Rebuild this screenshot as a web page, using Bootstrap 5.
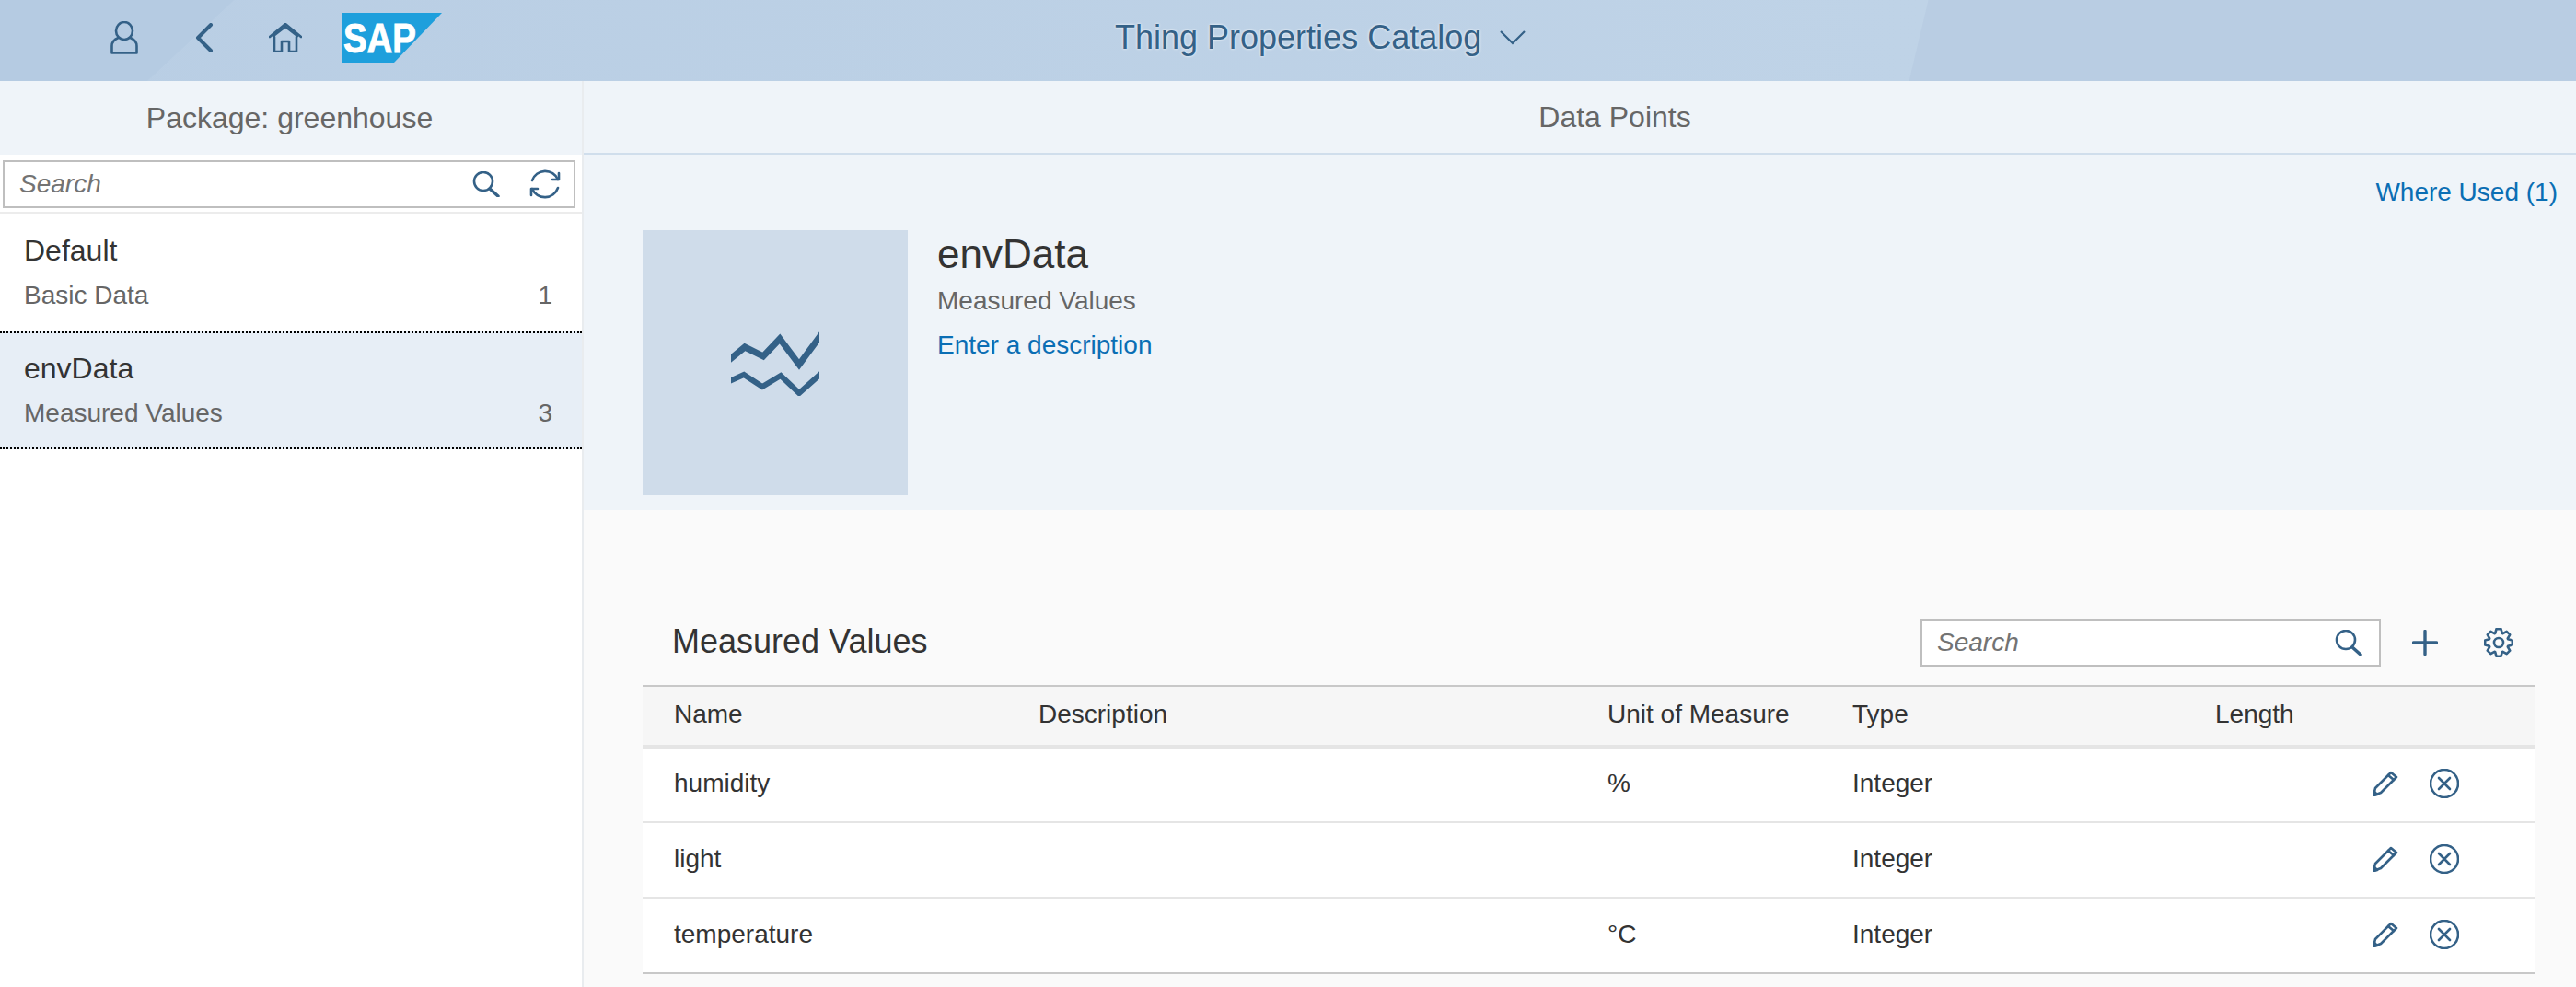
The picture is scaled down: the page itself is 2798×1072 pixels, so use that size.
<!DOCTYPE html>
<html lang="en">
<head>
  <meta charset="UTF-8">
  <title>Thing Properties Catalog</title>
  <link href="https://cdn.jsdelivr.net/npm/bootstrap@5.3.3/dist/css/bootstrap.min.css" rel="stylesheet">
  <style>
    html, body { height: 100%; }
    body { font-family: "Liberation Sans", Arial, sans-serif; font-size: 28px; color: #333; background: #fafafa; overflow: hidden; }
    svg { display: block; flex: none; }
    .ico { fill: none; stroke: #346187; stroke-width: 2.6; stroke-linecap: round; stroke-linejoin: round; }

    .shell-bar { height: 88px; padding-bottom: 6px; background:
      linear-gradient(137deg, #b5cbe2 0, #b5cbe2 173px, transparent 174px),
      linear-gradient(103.4deg, transparent 0, transparent 2037px, #b9cde3 2038px),
      linear-gradient(90deg, #b9cee4 0, #bfd3e7 2090px); }
    .shell-ico { margin-left: 120px; }
    .shell-title { margin-left: 731px; color: #346187; font-size: 36px; text-shadow: 0 0 3px #fff; }

    .side-pane { width: 634px; background: #fff; border-right: 2px solid #e9ecef; }
    .pane-title { height: 80px; background: #eff4f9; color: #666; font-size: 32px; padding-right: 3px; }
    .data-title { padding-left: 76px; height: 80px; border-bottom: 2px solid #d0deec; background: #eff4f9; color: #666; font-size: 32px; }

    .search-row { height: 64px; padding: 6px 7px 4px 3px; border-bottom: 2px solid #ececec; }
    .search-box { height: 52px; border: 2px solid #bfbfbf; background: #fff; }
    .search-box input { border: 0; outline: 0; flex: 1; min-width: 0; padding: 0 0 0 16px; font-size: 28px; font-style: italic; color: #666; background: transparent; }
    .search-box input::placeholder { color: #737373; opacity: 1; }

    .pkg-list .list-group-item { height: 128px; padding: 0 32px 3px 26px; border: 0; border-radius: 0; background: #fff; color: #333; }
    .pkg-list .pkg-on { height: 128px; background: #e7eef6; border-top: 2px dotted #000; border-bottom: 2px dotted #000; }
    .pkg-name { font-size: 32px; line-height: 40px; }
    .pkg-sub { font-size: 28px; line-height: 34px; color: #666; margin-top: 12px; }

    .obj-head { height: 386px; background: #eff4f9; }
    .where-row { height: 82px; padding-right: 20px; padding-top: 25px; line-height: 32px; }
    .link-sap { color: #0a6eb4; text-decoration: none; }
    .obj-tile { width: 288px; height: 288px; background: #cfdcea; margin-left: 64px; margin-right: 32px; }
    .obj-name { font-size: 44px; line-height: 50px; margin-top: 1px; }
    .obj-sub { color: #666; line-height: 34px; margin-top: 9px; }
    .obj-link { line-height: 34px; margin-top: 14px; }

    .tbl-wrap { padding: 118px 44px 0 64px; }
    .tbl-bar { height: 72px; padding-left: 32px; font-size: 36px; }
    .tbl-search { width: 500px; }
    .bar-plus { margin: 0 50px 0 34px; }
    .bar-gear { margin-right: 24px; }

    .val-table { table-layout: fixed; width: 100%; margin: 0; font-size: 28px; border-top: 2px solid #c8c8c8; }
    .val-table th { height: 66px; background: #f6f6f6; font-weight: 400; color: #333; border: 0; border-bottom: 4px solid #e5e5e5; padding: 0 0 3px 34px; vertical-align: middle; }
    .val-table td { height: 82px; background: #fff; color: #333; border: 0; border-bottom: 2px solid #e5e5e5; padding: 0 0 3px 34px; vertical-align: middle; }
    .val-table tr:last-child td { border-bottom-color: #c8c8c8; }
    .val-table td.act-cell { padding-left: 24px; }
  </style>
</head>
<body>
  <header class="shell-bar d-flex align-items-center">
    <svg class="shell-ico" width="30" height="36" viewBox="0 0 30 36"><g class="ico"><ellipse cx="15" cy="10.5" rx="9" ry="9.5"/><path d="M8.5 18 C3.5 20 1.5 23 1.5 27 V34.5 H28.5 V27 C28.5 23 26.5 20 21.5 18"/></g></svg>
    <svg style="margin-left:62px" width="20" height="32" viewBox="0 0 20 32"><path d="M17 2 L3 16 L17 30" fill="none" stroke="#346187" stroke-width="4" stroke-linecap="round" stroke-linejoin="round"/></svg>
    <svg style="margin-left:60px" width="36" height="32" viewBox="0 0 36 32"><g class="ico"><path d="M1 15 L18 1 L35 15"/><path d="M5 14 L18 4 L31 14"/><path d="M6 15 V31 H14 V20 H22 V31 H30 V15"/></g></svg>
    <svg style="margin-left:44px" width="108" height="54" viewBox="0 0 108 54"><polygon points="0,0 108,0 56,54 0,54" fill="#1e9fdc"/><text x="1" y="43" font-family="Liberation Sans" font-weight="700" font-size="44" fill="#fff" stroke="#fff" stroke-width="1" textLength="79" lengthAdjust="spacingAndGlyphs">SAP</text></svg>
    <span class="shell-title">Thing Properties Catalog</span>
    <svg style="margin-left:20px" width="28" height="16" viewBox="0 0 28 16"><path d="M1 1 L14 14 L27 1" fill="none" stroke="#346187" stroke-width="2.2"/></svg>
  </header>

  <div class="d-flex" style="height:984px">
    <aside class="side-pane flex-shrink-0">
      <div class="pane-title d-flex align-items-center justify-content-center">Package: greenhouse</div>
      <div class="search-row">
        <div class="search-box d-flex align-items-center">
          <input type="text" placeholder="Search">
          <svg width="30" height="28" viewBox="0 0 30 28"><g class="ico"><circle cx="12" cy="11" r="10"/><path d="M19 19 L28 27" stroke-width="3.4"/></g></svg>
          <svg style="margin:0 14px 0 32px" width="34" height="34" viewBox="0 0 34 34"><g class="ico"><path d="M3 13 A15 15 0 0 1 31 12"/><path d="M31 21 A15 15 0 0 1 3 22"/><path d="M25 12 H32 V5"/><path d="M9 22 H2 V29"/></g></svg>
        </div>
      </div>
      <div class="list-group pkg-list">
        <a class="list-group-item d-flex flex-column justify-content-center">
          <div class="pkg-name">Default</div>
          <div class="pkg-sub d-flex justify-content-between"><span>Basic Data</span><span>1</span></div>
        </a>
        <a class="list-group-item pkg-on d-flex flex-column justify-content-center">
          <div class="pkg-name">envData</div>
          <div class="pkg-sub d-flex justify-content-between"><span>Measured Values</span><span>3</span></div>
        </a>
      </div>
    </aside>

    <main class="flex-grow-1">
      <div class="data-title d-flex align-items-center justify-content-center">Data Points</div>
      <section class="obj-head">
        <div class="where-row d-flex justify-content-end"><a class="link-sap" href="#">Where Used (1)</a></div>
        <div class="d-flex">
          <div class="obj-tile d-flex align-items-center justify-content-center">
            <svg width="96" height="72" viewBox="0 0 96 72"><g fill="none" stroke="#346187" stroke-linejoin="miter"><path stroke-width="7" d="M-6 36 L15 19 L35 29 L53 10 L74 38 L102 0"/><path stroke-width="6" d="M-6 58 L14 49 L34 62 L54 50 L74 69 L102 44"/></g></svg>
          </div>
          <div>
            <div class="obj-name">envData</div>
            <div class="obj-sub">Measured Values</div>
            <div class="obj-link"><a class="link-sap" href="#">Enter a description</a></div>
          </div>
        </div>
      </section>

      <section class="tbl-wrap">
        <div class="tbl-bar d-flex align-items-start">
          <span class="me-auto" style="margin-top:-2px">Measured Values</span>
          <div class="search-box tbl-search d-flex align-items-center">
            <input type="text" placeholder="Search">
            <svg style="margin-right:18px" width="30" height="28" viewBox="0 0 30 28"><g class="ico"><circle cx="12" cy="11" r="10"/><path d="M19 19 L28 27" stroke-width="3.4"/></g></svg>
          </div>
          <svg class="bar-plus" style="margin-top:12px" width="28" height="28" viewBox="0 0 28 28"><path d="M14 1.5 V26.5 M1.5 14 H26.5" fill="none" stroke="#346187" stroke-width="3.4" stroke-linecap="round"/></svg>
          <svg class="bar-gear" style="margin-top:10px" width="32" height="32" viewBox="0 0 32 32"><g class="ico" stroke-width="2"><circle cx="16" cy="16" r="5"/><path id="gearPath"/></g></svg>
        </div>
        <table class="table val-table">
          <colgroup><col style="width:396px"><col style="width:618px"><col style="width:266px"><col style="width:394px"><col style="width:181px"><col></colgroup>
          <thead>
            <tr><th>Name</th><th>Description</th><th>Unit of Measure</th><th>Type</th><th>Length</th><th></th></tr>
          </thead>
          <tbody id="valBody"></tbody>
        </table>
      </section>
    </main>
  </div>

  <script>
    const rows = [
      ['humidity', '', '%', 'Integer'],
      ['light', '', '', 'Integer'],
      ['temperature', '', '°C', 'Integer']
    ];
    const pencil = '<svg width="28" height="28" viewBox="0 0 28 28"><g class="ico" stroke-width="2"><path d="M1 27 L3 19 L20 2 L26 7 L9 24 Z"/><path d="M17 5 L23 10"/><path d="M1 27 L5 26 L2 23 Z" fill="#346187"/></g></svg>';
    const cancel = '<svg width="32" height="32" viewBox="0 0 32 32"><g class="ico" stroke-width="2.2"><circle cx="16" cy="16" r="15"/><path d="M10 10 L22 22 M22 10 L10 22"/></g></svg>';
    document.getElementById('valBody').innerHTML = rows.map(r =>
      `<tr><td>${r[0]}</td><td>${r[1]}</td><td>${r[2]}</td><td>${r[3]}</td><td></td>` +
      `<td class="act-cell"><div class="d-flex align-items-center" style="gap:34px">${pencil}${cancel}</div></td></tr>`
    ).join('');

    // gear outline, 8 teeth
    let gear = '';
    for (let i = 0; i < 8; i++) {
      const a = i * Math.PI / 4;
      [[-0.36, 10.8], [-0.17, 15], [0.17, 15], [0.36, 10.8]].forEach(([d, r]) => {
        const x = (16 + r * Math.sin(a + d)).toFixed(1);
        const y = (16 - r * Math.cos(a + d)).toFixed(1);
        gear += (gear ? 'L' : 'M') + x + ' ' + y + ' ';
      });
    }
    document.getElementById('gearPath').setAttribute('d', gear + 'Z');
  </script>
  <script src="https://cdn.jsdelivr.net/npm/bootstrap@5.3.3/dist/js/bootstrap.bundle.min.js"></script>
</body>
</html>
